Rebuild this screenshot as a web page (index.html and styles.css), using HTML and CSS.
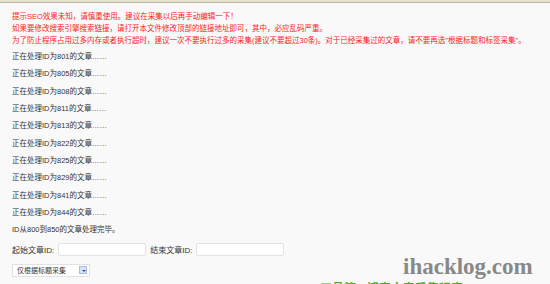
FILE: index.html
```html
<!DOCTYPE html>
<html lang="zh-CN">
<head>
  <meta charset="UTF-8" />
  <title>文章采集</title>
  <link rel="stylesheet" href="styles.css">
</head>
<body>

<div class="toolbar"></div>

<main class="content">
  <div class="notice">
    <p>提示SEO效果未知，请慎重使用。建议在采集以后再手动编辑一下！</p>
    <p>如果要修改搜索引擎搜索链接，请打开本文件修改顶部的链接地址即可，其中，必应乱码严重。</p>
    <p>为了防止程序占用过多内存或者执行超时，建议一次不要执行过多的采集(建议不要超过30条)。对于已经采集过的文章，请不要再选"根据标题和标签采集"。</p>
  </div>

  <div class="log">
    <p>正在处理ID为801的文章……</p>
    <p>正在处理ID为805的文章……</p>
    <p>正在处理ID为808的文章……</p>
    <p>正在处理ID为811的文章……</p>
    <p>正在处理ID为813的文章……</p>
    <p>正在处理ID为822的文章……</p>
    <p>正在处理ID为825的文章……</p>
    <p>正在处理ID为829的文章……</p>
    <p>正在处理ID为841的文章……</p>
    <p>正在处理ID为844的文章……</p>
    <p>ID从800到850的文章处理完毕。</p>
  </div>

  <form class="range-form">
    <div class="form-row">
      <label for="start-id">起始文章ID:</label>
      <input type="text" id="start-id" name="startId" />
      <label for="end-id">结束文章ID:</label>
      <input type="text" id="end-id" name="endId" />
    </div>

    <div class="select-box">
      <span class="select-text">仅根据标题采集</span>
      <span class="select-arrow"></span>
    </div>
  </form>
</main>

<div class="watermark">ihacklog.com</div>
<div class="site-tag">工具箱 · 博客文章采集程序</div>

</body>
</html>
```

FILE: styles.css
```css
* { margin: 0; padding: 0; box-sizing: border-box; }

body {
  background: #f9f9f9;
  font-family: 'Liberation Sans', 'Noto Sans CJK SC', sans-serif;
  color: #333;
  overflow: hidden;
}

.toolbar {
  height: 3px;
  background: #e6e3d3;
  border-bottom: 1px solid #b9b5a3;
}

.content {
  padding: 8px 12px 0;
}

.notice {
  color: #f22;
  font-size: 7.5px;
  line-height: 12px;
  margin-bottom: 4px;
}

.log p {
  font-size: 7.5px;
  line-height: 12px;
  margin-bottom: 5.33px;
}

.range-form {
  padding-top: 1px;
}

.form-row {
  display: flex;
  align-items: center;
  gap: 4px;
  font-size: 8px;
  color: #333;
}

.form-row input {
  width: 88px;
  height: 13px;
  background: #fff;
  border: 1px solid #e2e2e2;
  border-radius: 2px;
}

.select-box {
  margin-top: 8px;
  width: 78px;
  height: 13px;
  display: flex;
  align-items: center;
  justify-content: space-between;
  background: #fff;
  border: 1px solid #e2e2e2;
  padding: 0 2px 0 4px;
  font-size: 7px;
}

.select-arrow {
  width: 8px;
  height: 8px;
  background: #d6e2f5;
  border: 1px solid #a9bde0;
  position: relative;
}

.select-arrow::after {
  content: '';
  position: absolute;
  left: 1.5px;
  top: 2.5px;
  border-left: 2px solid transparent;
  border-right: 2px solid transparent;
  border-top: 2px solid #34528a;
}

.watermark {
  position: absolute;
  left: 403px;
  top: 255px;
  font-family: 'Liberation Serif', serif;
  font-weight: bold;
  font-size: 23px;
  line-height: 23px;
  color: #888;
}

.site-tag {
  position: absolute;
  left: 320px;
  top: 279px;
  font-size: 12px;
  font-weight: bold;
  color: #55aa33;
  white-space: nowrap;
}
```
